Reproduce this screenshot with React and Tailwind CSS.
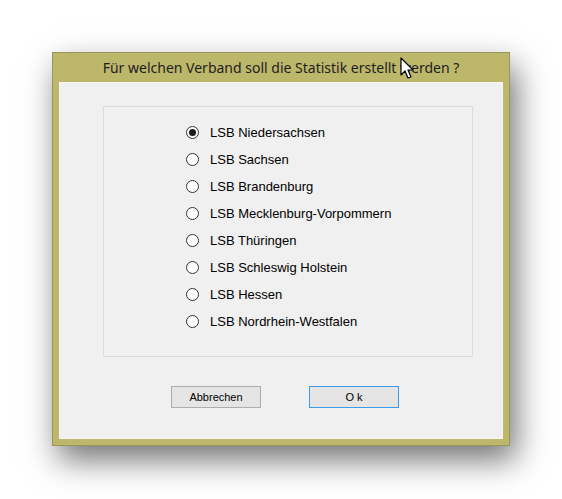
import React, { useState } from "react";

const verbaende = [
  "LSB Niedersachsen",
  "LSB Sachsen",
  "LSB Brandenburg",
  "LSB Mecklenburg-Vorpommern",
  "LSB Thüringen",
  "LSB Schleswig Holstein",
  "LSB Hessen",
  "LSB Nordrhein-Westfalen",
];

function Radio({ label, checked, onSelect }) {
  return (
    <div className="flex items-center h-[27px] cursor-default" onClick={onSelect}>
      <span className="w-[13px] h-[13px] rounded-full border border-[#333333] bg-white flex items-center justify-center shrink-0">
        {checked && <span className="w-[7px] h-[7px] rounded-full bg-[#1a1a1a]" />}
      </span>
      <span className="ml-[11px] text-[13px] text-black leading-none">{label}</span>
    </div>
  );
}

function Cursor() {
  return (
    <svg
      className="absolute left-[400px] top-[57px]"
      width="16"
      height="24"
      viewBox="0 0 16 24"
    >
      <path
        d="M1 1 L1 18 L5 14 L8 21 L11 20 L8 13 L13 13 Z"
        fill="white"
        stroke="black"
        strokeWidth="1.2"
        strokeLinejoin="round"
      />
    </svg>
  );
}

export default function App() {
  const [selected, setSelected] = useState(0);

  return (
    <div
      className="relative w-[562px] h-[499px] bg-white pt-[52px] pl-[52px]"
      style={{ fontFamily: '"Liberation Sans", Arial, sans-serif' }}
    >
      <div className="w-[458px] h-[394px] bg-[#bdb76b] border border-[#9a9558] shadow-[6px_14px_30px_rgba(0,0,0,0.55)] flex flex-col">
        <div
          className="h-[29px] flex items-center justify-center text-[14px] text-[#1e1e1e]"
          style={{ fontFamily: '"Noto Sans", "Open Sans", sans-serif' }}
        >
          Für welchen Verband soll die Statistik erstellt werden ?
        </div>
        <div className="mx-[6px] mb-[6px] flex-1 bg-[#f0f0f0] border border-[#f7f7f2] flex flex-col">
          <div className="ml-[43px] mt-[23px] w-[370px] h-[251px] border border-[#dcdcdc] pl-[82px] pt-[12px]">
            {verbaende.map((name, i) => (
              <Radio
                key={name}
                label={name}
                checked={selected === i}
                onSelect={() => setSelected(i)}
              />
            ))}
          </div>
          <div className="flex mt-[29px] ml-[111px] gap-[48px]">
            <button className="w-[90px] h-[22px] border border-[#adadad] bg-[#e5e5e5] text-[11px] text-black">
              Abbrechen
            </button>
            <button className="w-[90px] h-[22px] border border-[#3c9be8] bg-[#e5e5e5] text-[11px] text-black">
              O k
            </button>
          </div>
        </div>
      </div>
      <Cursor />
    </div>
  );
}
